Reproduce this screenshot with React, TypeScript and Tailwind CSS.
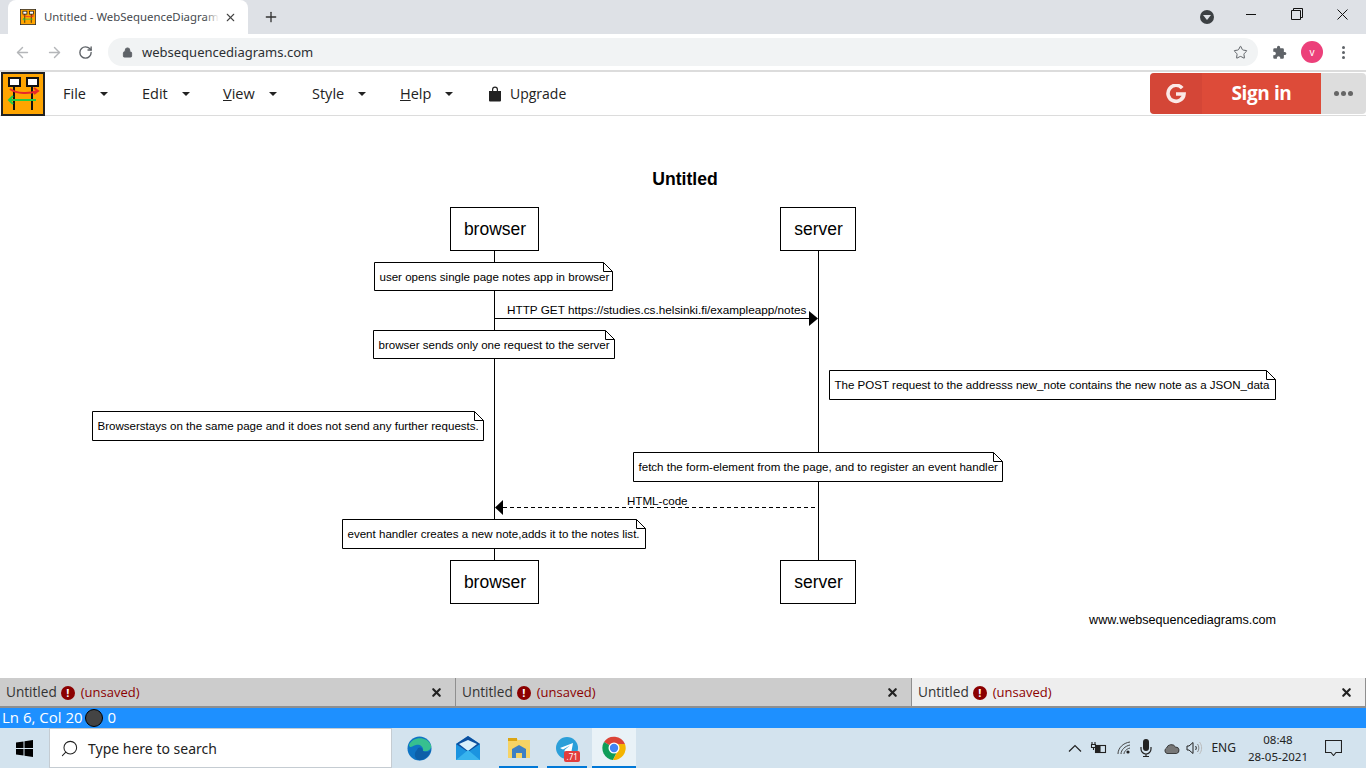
import { ArrowLeft, ArrowRight, Lock, Plus, RotateCw, Search, Star, X } from "lucide-react";

const sans = "font-['Open_Sans',sans-serif]";
const ui = "font-['Noto_Sans',sans-serif]";

function Favicon({ size }: { size: number }) {
  return (
    <svg width={size} height={size} viewBox="0 0 44 44">
      <rect x="1" y="1" width="42" height="42" fill="#ffa500" stroke="#222" strokeWidth="2" />
      <rect x="8" y="6" width="11" height="8" fill="#fff" stroke="#111" strokeWidth="2" />
      <rect x="26" y="6" width="11" height="8" fill="#fff" stroke="#111" strokeWidth="2" />
      <path d="M13 14V38M31 14V38" stroke="#111" strokeWidth="2" />
      <path d="M9 17C16 22 28 22 37 19M33 16l4 3-4 3" fill="none" stroke="#e8282b" strokeWidth="2" />
      <path d="M35 28H8M12 24l-4 4 4 4" fill="none" stroke="#22cc44" strokeWidth="2" />
    </svg>
  );
}

function Caret() {
  return <span className="ml-[14px] inline-block h-0 w-0 border-x-[4px] border-t-[4px] border-x-transparent border-t-[#222]" />;
}

function MenuItem({ label, hot, width }: { label: string; hot?: boolean; width: string }) {
  return (
    <div className={`flex items-center ${width}`}>
      <span className="text-[14.5px] text-[#222]">
        {hot ? (
          <>
            <span className="underline">{label[0]}</span>
            {label.slice(1)}
          </>
        ) : (
          label
        )}
      </span>
      <Caret />
    </div>
  );
}

function EditorTab({ active, width }: { active?: boolean; width: string }) {
  return (
    <div className={`flex h-full items-center border-r border-[#8f8f8f] pl-[6px] pr-[12px] pt-px ${width} ${active ? "bg-[#eeeeee]" : "bg-[#cccccc]"}`}>
      <span className="text-[13.6px] text-[#333]">Untitled</span>
      <span className="ml-[4px] flex h-[14px] w-[14px] items-center justify-center rounded-full bg-[#8b0000] text-[11px] font-bold leading-none text-white">!</span>
      <span className="ml-[6px] text-[13px] text-[#8b0000]">(unsaved)</span>
      <X className="ml-auto text-[#222]" size={13} strokeWidth={4} />
    </div>
  );
}

function Note({ x, y, w, h, text }: { x: number; y: number; w: number; h: number; text: string }) {
  const r = x + w;
  return (
    <g>
      <path d={`M${x} ${y}H${r - 9}L${r} ${y + 9}V${y + h}H${x}Z`} fill="#fff" stroke="#000" />
      <path d={`M${r - 9} ${y}V${y + 9}H${r}`} fill="none" stroke="#000" />
      <text x={x + 5} y={y + 18} fontSize="11.55">{text}</text>
    </g>
  );
}

function Actor({ x, y, w, label }: { x: number; y: number; w: number; label: string }) {
  return (
    <g>
      <rect x={x} y={y} width={w} height="43" fill="#fff" stroke="#000" />
      <text x={x + w / 2 + 0.5} y={y + 27} fontSize="17.5" textAnchor="middle">{label}</text>
    </g>
  );
}

function Diagram() {
  return (
    <svg width="1366" height="562" viewBox="0 116 1366 562" className="block font-['Liberation_Sans',sans-serif]">
      <text x="685" y="185" fontSize="17.6" fontWeight="700" textAnchor="middle">Untitled</text>
      <path d="M494.5 250V561M818.5 250V561" stroke="#000" />
      <Actor x={450.5} y={207.5} w={88} label="browser" />
      <Actor x={780.5} y={207.5} w={75} label="server" />
      <Actor x={450.5} y={560.5} w={88} label="browser" />
      <Actor x={780.5} y={560.5} w={75} label="server" />
      <Note x={374.5} y={262.5} w={238} h={28} text="user opens single page notes app in browser" />
      <text x="507" y="314" fontSize="11.75">HTTP GET https://studies.cs.helsinki.fi/exampleapp/notes</text>
      <path d="M494.5 318.5H810" stroke="#000" />
      <path d="M818 318.5L809 311V326Z" fill="#000" />
      <Note x={373.5} y={330.5} w={241} h={28} text="browser sends only one request to the server" />
      <Note x={829.5} y={370.5} w={446} h={29} text="The POST request to the addresss new_note contains the new note as a JSON_data" />
      <Note x={92.5} y={411.5} w={391} h={29} text="Browserstays on the same page and it does not send any further requests." />
      <Note x={633.5} y={452.5} w={369} h={29} text="fetch the form-element from the page, and to register an event handler" />
      <text x="627" y="505" fontSize="11.6">HTML-code</text>
      <path d="M503 507.5H818" stroke="#000" strokeDasharray="4 3" />
      <path d="M495 507.5L503 500V515Z" fill="#000" />
      <Note x={342.5} y={519.5} w={303} h={29} text="event handler creates a new note,adds it to the notes list." />
      <text x="1276" y="624" fontSize="12.6" textAnchor="end">www.websequencediagrams.com</text>
    </svg>
  );
}

function Taskbar() {
  return (
    <div className={`flex h-[40px] items-stretch bg-[#d3e3ee] ${ui}`}>
      <div className="flex w-[49px] items-center justify-center">
        <svg width="17" height="17" viewBox="0 0 17 17" fill="#000">
          <path d="M0 2.5L7.5 1.4V8H0ZM8.5 1.3L17 0V8H8.5ZM0 9H7.5V15.6L0 14.5ZM8.5 9H17V17L8.5 15.8Z" />
        </svg>
      </div>
      <div className="flex w-[343px] items-center border border-[#c5ccd2] bg-white pl-[10px]">
        <Search size={19} strokeWidth={1.3} className="-scale-x-100 text-[#222]" />
        <span className="ml-[9px] pt-px text-[14px] text-[#222]">Type here to search</span>
      </div>
      <div className="ml-[9px] flex w-[235px] items-center">
        <div className="relative flex h-full w-[37px] items-center justify-center">
          <svg width="25" height="25" viewBox="0 0 25 25">
            <circle cx="12.5" cy="12.5" r="12" fill="#0f74c4" />
            <path d="M2 9C5 1 19 -1 24 9C25 14 20 16 16 15C17 11 13 8 9 9C5 10 3 13 2 9Z" fill="#37c08f" />
            <path d="M10 14C11 10 16 11 16 15C20 17 23 15 24 14C22 21 16 25 11 24C7 22 7 16 10 14Z" fill="#0d5fa8" />
          </svg>
        </div>
        <div className="ml-[12px] flex h-full w-[37px] items-center justify-center">
          <svg width="24" height="24" viewBox="0 0 24 24">
            <path d="M0 8L12 0L24 8V24H0Z" fill="#1b94e0" />
            <path d="M0 8L12 0L24 8L12 16Z" fill="#0c4f9e" />
            <path d="M3 8L12 4L21 8L12 15Z" fill="#d8f0fb" />
            <path d="M0 24L12 14L24 24Z" fill="#38b4ee" />
          </svg>
        </div>
        <div className="relative ml-[12px] flex h-full w-[40px] items-center justify-center">
          <svg width="22" height="22" viewBox="0 0 22 22">
            <path d="M0 1H8L10 3H22V21H0Z" fill="#f6d365" />
            <rect x="0" y="1" width="9" height="3" fill="#dba514" />
            <path d="M4 12L11 8L18 12V21H14V16H8V21H4Z" fill="#3d7fc4" />
          </svg>
          <span className="absolute bottom-0 left-0 right-0 h-[2px] bg-[#0078d7]" />
        </div>
        <div className="relative ml-[9px] flex h-full w-[40px] items-center justify-center">
          <svg width="22" height="22" viewBox="0 0 22 22">
            <circle cx="11" cy="11" r="11" fill="#2b9fd9" />
            <path d="M4 11L17 6L15 17L11 14L9 16L8.5 13L14 8.5L7 12.5Z" fill="#fff" />
          </svg>
          <span className="absolute bottom-[6px] right-[7px] flex h-[11px] w-[16px] items-center justify-center rounded-[2px] bg-[#e23d3d] text-[8px] leading-none text-white">.71</span>
          <span className="absolute bottom-0 left-0 right-0 h-[2px] bg-[#0078d7]" />
        </div>
        <div className="relative ml-[5px] flex h-full w-[44px] items-center justify-center bg-[#e9f2f7]">
          <svg width="24" height="24" viewBox="0 0 24 24">
            <path d="M12 12L2 6A12 12 0 0 1 23 8H12Z" fill="#db4437" />
            <path d="M2 6A12 12 0 0 0 11 24L16 14Z" fill="#0f9d58" />
            <path d="M23 8A12 12 0 0 1 11 24L16 14L12 8Z" fill="#f4b400" />
            <circle cx="12" cy="12" r="5.5" fill="#fff" />
            <circle cx="12" cy="12" r="4.2" fill="#4285f4" />
          </svg>
          <span className="absolute bottom-0 left-0 right-0 h-[2px] bg-[#0078d7]" />
        </div>
      </div>
      <div className="ml-auto flex items-center text-[#222]">
        <svg width="14" height="8" viewBox="0 0 14 8" fill="none" stroke="#222" strokeWidth="1.2"><path d="M1 7.5L7 1.5L13 7.5" /></svg>
        <svg className="ml-[8px]" width="17" height="14" viewBox="0 0 17 14" fill="none" stroke="#222" strokeWidth="1.1">
          <rect x="5.5" y="4.5" width="10" height="7" />
          <rect x="6.5" y="5.5" width="3.5" height="5" fill="#222" />
          <path d="M1 3.5H6M2 1V3.5M5 1V3.5M1.5 3.5V6.5H5.5V3.5M3.5 6.5V9" />
        </svg>
        <svg className="ml-[10px]" width="14" height="14" viewBox="0 0 14 14" fill="none" stroke="#444" strokeWidth="1">
          <path d="M1 13C1 7 6 2 13 1M4 13C4 9 8 5 13 4M7 13C7 11 9 8 13 7" />
          <circle cx="11" cy="11" r="1.6" fill="#222" stroke="none" />
        </svg>
        <svg className="ml-[9px]" width="12" height="18" viewBox="0 0 12 18" fill="none" stroke="#222" strokeWidth="1.2">
          <rect x="3" y="0" width="6" height="12" rx="3" fill="#222" stroke="none" />
          <path d="M1 8V10A5 5 0 0 0 11 10V8M6 15V17M3 17.5H9" />
        </svg>
        <svg className="ml-[11px]" width="17" height="13" viewBox="0 0 17 11">
          <path d="M4 10.5A3 3 0 0 1 3.5 5A5 5 0 0 1 12.5 4A3.3 3.3 0 0 1 13.5 10.5Z" fill="#777" stroke="#222" strokeWidth="0.8" />
        </svg>
        <svg className="ml-[6px]" width="17" height="14" viewBox="0 0 17 14" fill="none" stroke="#222" strokeWidth="1">
          <path d="M1 5H3L7 1.5V12.5L3 9H1Z" />
          <path d="M9.5 5C10.5 6 10.5 8 9.5 9" />
          <path d="M11.5 3C13.3 5 13.3 9 11.5 11" stroke="#888" />
          <path d="M13.5 1C16.3 4.5 16.3 9.5 13.5 13" stroke="#bbb" />
        </svg>
        <span className="ml-[8px] text-[12px]">ENG</span>
        <div className="ml-[12px] flex flex-col items-center text-[11.5px] leading-[17px]">
          <span>08:48</span>
          <span>28-05-2021</span>
        </div>
        <div className="ml-[17px] mr-[24px]">
          <svg width="17" height="16" viewBox="0 0 17 16" fill="none" stroke="#222" strokeWidth="1.1">
            <path d="M0.5 0.5H16.5V12.5H11L8.5 15.5L6 12.5H0.5Z" />
          </svg>
        </div>
      </div>
    </div>
  );
}

export default function App() {
  return (
    <div className={`flex h-[768px] w-[1366px] flex-col overflow-hidden bg-white ${ui}`}>
      {/* browser chrome */}
      <div className="flex h-[34px] items-end bg-[#dee1e6]">
        <div className="ml-[8px] flex h-[34px] w-[240px] items-center rounded-t-[8px] bg-white pl-[12px] pr-[11px]">
          <Favicon size={16} />
          <div className="relative ml-[8px] w-[175px] overflow-hidden whitespace-nowrap text-[11.4px] text-[#45494e]">
            Untitled - WebSequenceDiagrams
            <span className="absolute inset-y-0 right-0 w-[14px] bg-gradient-to-r from-transparent to-white" />
          </div>
          <X className="ml-auto text-[#444]" size={13} strokeWidth={2} />
        </div>
        <Plus className="mb-[9px] ml-[15px] text-[#333]" size={16} strokeWidth={2} />
        <div className="ml-auto flex items-start self-stretch pt-[8px]">
          <span className="mt-[2px] flex h-[14px] w-[14px] items-center justify-center rounded-full bg-[#3c4043]">
            <span className="h-0 w-0 border-x-[4px] border-t-[5px] border-x-transparent border-t-[#dee1e6]" />
          </span>
          <span className="ml-[32px] mt-[6px] h-px w-[10px] bg-[#111]" />
          <svg className="ml-[35px]" width="12" height="12" viewBox="0 0 12 12" fill="none" stroke="#111">
            <path d="M0.5 2.5H9.5V11.5H0.5ZM2.5 2.5V0.5H11.5V9.5H9.5" />
          </svg>
          <svg className="ml-[34px] mr-[18px] mt-px" width="11" height="11" viewBox="0 0 11 11" fill="none" stroke="#111">
            <path d="M0.5 0.5L10.5 10.5M10.5 0.5L0.5 10.5" />
          </svg>
        </div>
      </div>
      <div className="flex h-[36px] items-center bg-white">
        <ArrowLeft className="ml-[14px] text-[#b4b6b9]" size={17} strokeWidth={2} />
        <ArrowRight className="ml-[15px] text-[#b4b6b9]" size={17} strokeWidth={2} />
        <RotateCw className="ml-[15px] text-[#5f6368]" size={15} strokeWidth={2.2} />
        <div className="ml-[15px] flex h-[28px] w-[1150px] items-center rounded-full bg-[#f1f3f4] pl-[14px] pr-[10px]">
          <Lock className="text-[#5f6368]" size={11} fill="#5f6368" strokeWidth={2} />
          <span className="ml-[9px] pt-px text-[13px] text-[#2c2f33]">websequencediagrams.com</span>
          <Star className="ml-auto text-[#5f6368]" size={15} strokeWidth={1.6} />
        </div>
        <svg className="ml-[14px]" width="15" height="15" viewBox="0 0 24 24" fill="#5f6368">
          <path d="M20.5 11H19V7a2 2 0 0 0-2-2h-4V3.5a2.5 2.5 0 0 0-5 0V5H4a2 2 0 0 0-2 2v3.8h1.5a2.7 2.7 0 0 1 0 5.4H2V20a2 2 0 0 0 2 2h3.8v-1.5a2.7 2.7 0 0 1 5.4 0V22H17a2 2 0 0 0 2-2v-4h1.5a2.5 2.5 0 0 0 0-5z" />
        </svg>
        <span className="ml-[14px] flex h-[22px] w-[22px] items-center justify-center rounded-full bg-[#ec407a] text-[10px] text-white">v</span>
        <span className="ml-[19px] flex flex-col gap-[2px]">
          <span className="h-[3px] w-[3px] rounded-full bg-[#5f6368]" />
          <span className="h-[3px] w-[3px] rounded-full bg-[#5f6368]" />
          <span className="h-[3px] w-[3px] rounded-full bg-[#5f6368]" />
        </span>
      </div>

      {/* menu bar */}
      <div className={`flex h-[46px] items-center border-y border-[#dcdcdc] border-t-2 ${sans}`}>
        <div className="ml-[1px] shrink-0"><Favicon size={44} /></div>
        <div className="ml-[18px] flex items-center">
          <MenuItem label="File" width="w-[79px]" />
          <MenuItem label="Edit" width="w-[81px]" />
          <MenuItem label="View" hot width="w-[89px]" />
          <MenuItem label="Style" width="w-[88px]" />
          <MenuItem label="Help" hot width="w-[88px]" />
          <svg width="14" height="16" viewBox="0 0 14 16" fill="#222">
            <path d="M4 5V3.5a3 3 0 0 1 6 0V5h3v9.5a1 1 0 0 1-1 1H2a1 1 0 0 1-1-1V5ZM5.2 5h3.6V3.5a1.8 1.8 0 0 0-3.6 0Z" />
          </svg>
          <span className="ml-[8px] text-[14px] text-[#222]">Upgrade</span>
        </div>
        <div className="ml-auto flex h-[41px] w-[216px] overflow-hidden rounded-[4px] bg-[#dddddd]">
          <div className="flex w-[52px] items-center justify-center bg-[#d44637]">
            <svg width="20" height="20" viewBox="0 0 20 20" fill="none" stroke="#fbe9e7" strokeWidth="3.6">
              <path d="M16.2 4.2A8 8 0 1 0 18 10H10" />
            </svg>
          </div>
          <div className="flex w-[119px] items-center justify-center bg-[#dd4b39] text-[19px] font-bold tracking-[-0.4px] text-white">Sign in</div>
          <div className="flex flex-1 items-center justify-center gap-[2px]">
            <span className="h-[5px] w-[5px] rounded-full bg-[#666]" />
            <span className="h-[5px] w-[5px] rounded-full bg-[#666]" />
            <span className="h-[5px] w-[5px] rounded-full bg-[#666]" />
          </div>
        </div>
      </div>

      <div className="flex-1 overflow-hidden">
        <Diagram />
      </div>

      {/* editor tabs and status */}
      <div className={`flex h-[30px] border-b-2 border-[#8f8f8f] ${sans}`}>
        <EditorTab width="w-[456px]" />
        <EditorTab width="w-[456px]" />
        <EditorTab active width="flex-1" />
      </div>
      <div className={`flex h-[20px] items-center bg-[#1e90ff] pb-px pl-[2px] text-[15px] text-white ${sans}`}>
        <span>Ln 6, Col 20</span>
        <span className="ml-[2px] h-[18px] w-[18px] rounded-full border border-black bg-[#444]" />
        <span className="ml-[5px]">0</span>
      </div>
      <Taskbar />
    </div>
  );
}
